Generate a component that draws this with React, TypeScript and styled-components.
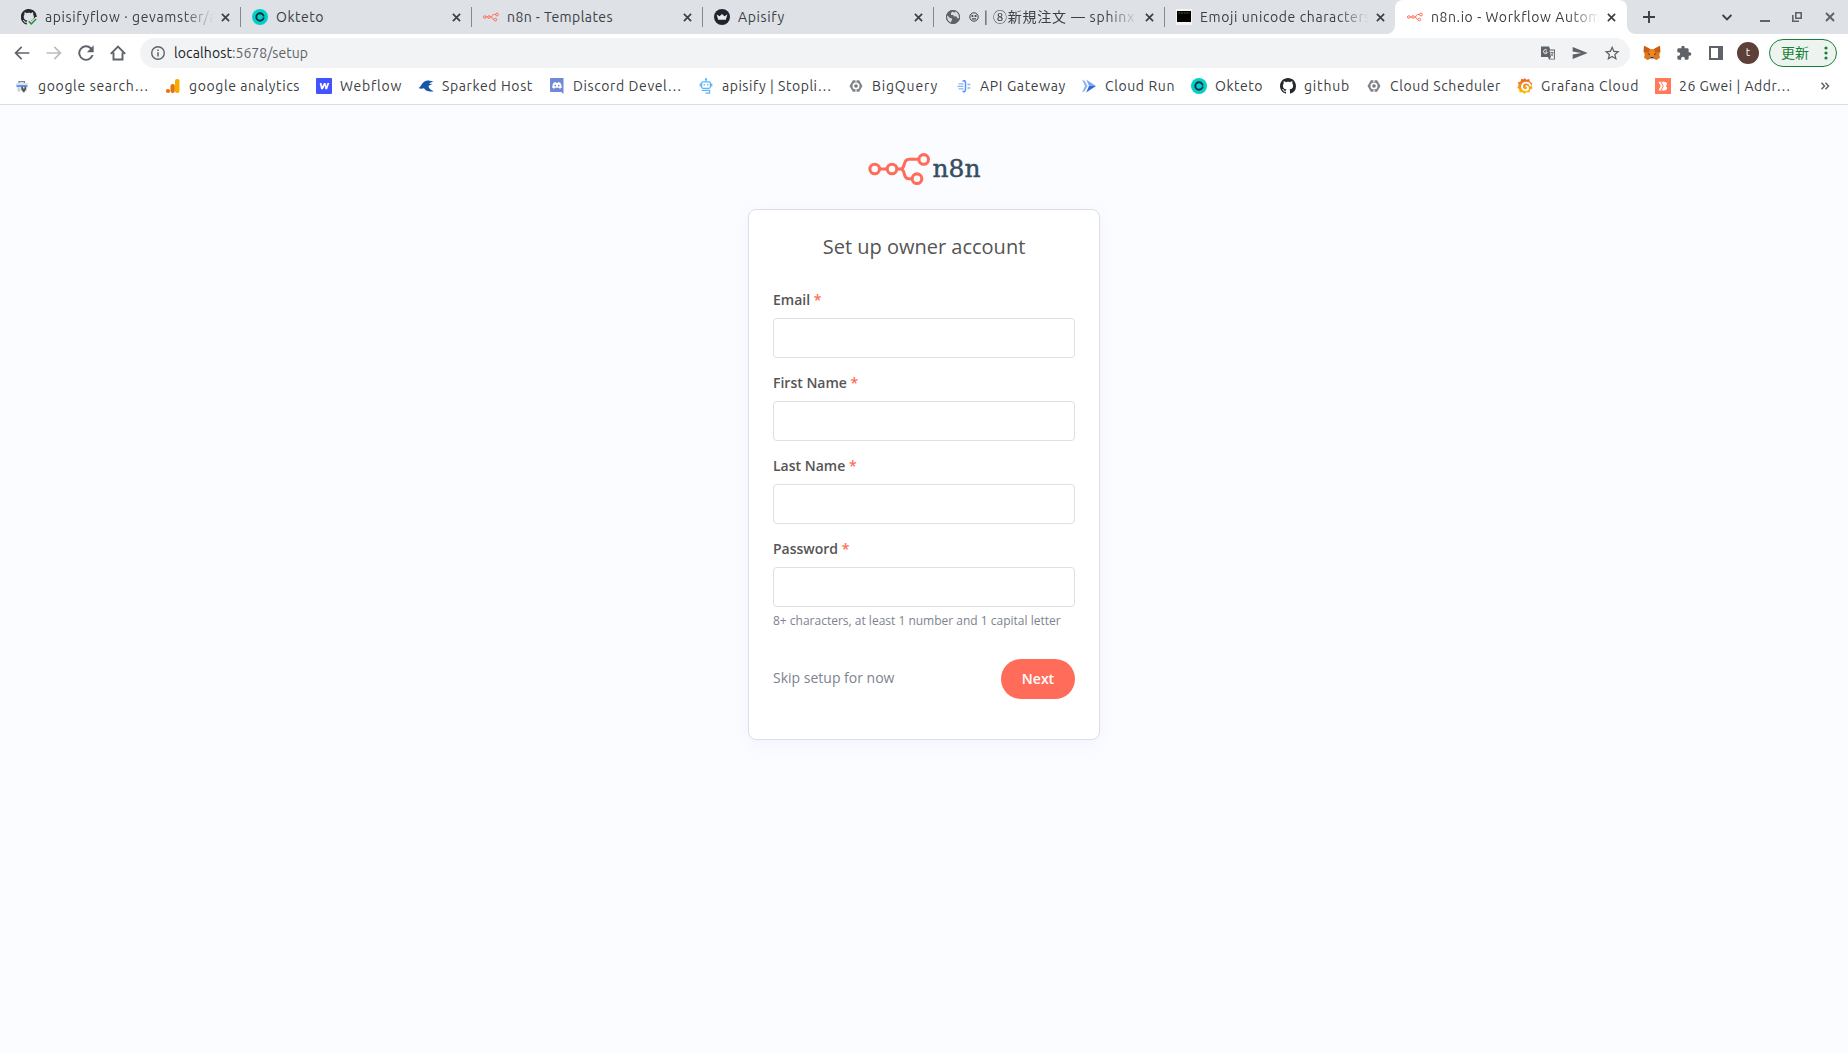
import React, { useLayoutEffect, useRef } from "react";
import styled, { createGlobalStyle } from "styled-components";

const Global = createGlobalStyle`
  * { box-sizing: border-box; }
  html, body { margin: 0; height: 100%; overflow: hidden; background: #fbfcff; }
  svg { display: block; flex: none; }
`;

const UI_FONT = `Ubuntu, "Noto Sans", "Noto Sans CJK JP", sans-serif`;

const Window = styled.div`
  width: 1848px;
  height: 1053px;
  display: flex;
  flex-direction: column;
  font-family: ${UI_FONT};
  font-size: 14px;
  color: #3c4043;
`;

/* ---------- text that spreads its letters over a set width ---------- */

const FitBox = styled.span<{ $w: number }>`
  width: ${(p) => p.$w}px;
  flex: none;
  white-space: pre;
  display: block;
`;

function Fit({ w, children }: { w: number; children: string }) {
  const ref = useRef<HTMLSpanElement>(null);
  useLayoutEffect(() => {
    const el = ref.current;
    if (!el) return;
    el.style.letterSpacing = "0px";
    const natural = el.getBoundingClientRect().width;
    el.style.letterSpacing = `${(w - natural) / Array.from(children).length}px`;
  }, [w, children]);
  return (
    <FitBox $w={w}>
      <span ref={ref}>{children}</span>
    </FitBox>
  );
}

/* ---------- tab strip ---------- */

const TabStrip = styled.div`
  height: 34px;
  flex: none;
  display: flex;
  align-items: stretch;
  background: #dee1e6;
  padding-left: 9px;
`;

const Tab = styled.div<{ $line?: boolean }>`
  position: relative;
  width: 231px;
  flex: none;
  display: flex;
  align-items: center;
  padding: 0 9px 0 12px;
  line-height: 20px;
  &::after {
    content: "";
    display: ${(p) => (p.$line ? "block" : "none")};
    position: absolute;
    right: -1px;
    top: 7px;
    width: 1px;
    height: 20px;
    background: #85888d;
  }
`;

/* The selected tab flares out into the toolbar at both of its lower corners. */
const ActiveTab = styled(Tab)`
  width: 232px;
  background: #fff;
  border-radius: 8px 8px 0 0;
  &::before,
  &::after {
    content: "";
    display: block;
    position: absolute;
    top: auto;
    bottom: 0;
    width: 8px;
    height: 8px;
  }
  &::before {
    left: -8px;
    background: radial-gradient(circle at 0 0, transparent 7.5px, #fff 8px);
  }
  &::after {
    right: -8px;
    background: radial-gradient(circle at 100% 0, transparent 7.5px, #fff 8px);
  }
`;

const TabTitle = styled.div<{ $fade?: boolean }>`
  width: 174px;
  flex: none;
  margin-left: 8px;
  overflow: hidden;
  display: flex;
  align-items: center;
  mask-image: ${(p) => (p.$fade ? "linear-gradient(90deg, #000 138px, transparent 169px)" : "none")};
`;

const CloseSlot = styled.div`
  margin-left: 2px;
  width: 10px;
`;

const Cross = ({ s = 9, c = "#3c4043" }: { s?: number; c?: string }) => (
  <svg width={s} height={s} viewBox="0 0 9 9">
    <path d="M.9.9l7.2 7.2M8.1.9L.9 8.1" stroke={c} strokeWidth="1.700" />
  </svg>
);

const StripControls = styled.div`
  display: flex;
  align-items: center;
  flex: 1;
  padding-left: 16px;
`;

const Gap = styled.span<{ $w: number }>`
  width: ${(p) => p.$w}px;
  flex: none;
`;

/* ---------- toolbar ---------- */

const Toolbar = styled.div`
  height: 37px;
  flex: none;
  background: #fff;
  display: flex;
  align-items: center;
  padding: 0 11px 0 14px;
`;

const Nav = styled.div`
  display: flex;
  flex: none;
  gap: 16px;
  width: 126px;
`;

const Omnibox = styled.div`
  width: 1490px;
  flex: none;
  height: 30px;
  border-radius: 15px;
  background: #f1f3f4;
  display: flex;
  align-items: center;
  padding: 0 10px;
`;

const Url = styled.div`
  display: flex;
  flex: 1;
  margin-left: 8px;
  color: #202124;
  line-height: 20px;
`;

const UrlRest = styled.span`
  color: #5f6368;
`;

const Actions = styled.div`
  display: flex;
  align-items: center;
  gap: 16px;
`;

const Extensions = styled(Actions)`
  margin-left: 13px;
`;

const FoxSlot = styled.div`
  width: 17px;
`;

const Avatar = styled.div`
  width: 22px;
  height: 22px;
  border-radius: 50%;
  background: #5d4037;
  color: #fff;
  font-size: 11px;
  line-height: 21px;
  text-align: center;
  margin-left: -3px;
`;

const Update = styled.div`
  width: 68px;
  height: 28px;
  margin-left: -6px;
  border: 1px solid #188038;
  border-radius: 14px;
  background: #edf4ef;
  color: #188038;
  display: flex;
  align-items: center;
  justify-content: space-between;
  padding: 0 8px 0 11px;
  line-height: 24px;
`;

/* ---------- bookmarks ---------- */

const Bookmarks = styled.div`
  height: 34px;
  flex: none;
  background: #fff;
  border-bottom: 1px solid #dadce0;
  display: flex;
  align-items: center;
  padding: 0 0 3px 14px;
`;

const Bookmark = styled.div<{ $w: number }>`
  width: ${(p) => p.$w}px;
  flex: none;
  display: flex;
  gap: 8px;
  align-items: center;
  line-height: 20px;
`;

/* ---------- setup page ---------- */

const Page = styled.main`
  flex: 1;
  background: #fbfcff;
  display: flex;
  flex-direction: column;
  align-items: center;
  padding-top: 46px;
  font-family: "Open Sans", sans-serif;
`;

const Card = styled.form`
  width: 352px;
  height: 531px;
  margin-top: 18px;
  padding: 24px;
  background: #fff;
  border: 1px solid #dbdfe7;
  border-radius: 8px;
  box-shadow: 0 4px 16px rgba(99, 77, 255, 0.06);
`;

const Title = styled.h1`
  margin: 0 0 32px;
  font-size: 20px;
  font-weight: 400;
  line-height: 25px;
  text-align: center;
  color: #555;
`;

const Field = styled.label`
  display: block;
  margin-bottom: 16px;
`;

const FieldName = styled.span`
  display: block;
  height: 27px;
  font-size: 14px;
  line-height: 17px;
  font-weight: 600;
  color: #555;
`;

const Required = styled.span`
  color: #ff6d5a;
`;

const Input = styled.input`
  display: block;
  width: 302px;
  height: 40px;
  border: 1px solid #dbdfe7;
  border-radius: 4px;
  background: #fff;
  outline: none;
`;

const Hint = styled.div`
  margin-top: -11px;
  font-size: 12px;
  line-height: 18px;
  color: #7d838f;
`;

const Footer = styled.div`
  display: flex;
  justify-content: space-between;
  align-items: center;
  margin-top: 29px;
`;

const Skip = styled.a`
  font-size: 14px;
  line-height: 18px;
  padding-bottom: 2px;
  color: #7d838f;
`;

const Next = styled.button`
  width: 74px;
  height: 40px;
  border: 0;
  border-radius: 20px;
  background: #ff6d5a;
  color: #fff;
  font: 600 14px/18px "Open Sans", sans-serif;
  padding: 0;
`;

/* ---------- icons ---------- */

const OCTO =
  "M8 0C3.58 0 0 3.58 0 8c0 3.54 2.29 6.53 5.47 7.59.4.07.55-.17.55-.38 0-.19-.01-.82-.01-1.49-2.01.37-2.53-.49-2.69-.94-.09-.23-.48-.94-.82-1.13-.28-.15-.68-.52-.01-.53.63-.01 1.08.58 1.23.82.72 1.21 1.87.87 2.33.66.07-.52.28-.87.51-1.07-1.78-.2-3.64-.89-3.64-3.95 0-.87.31-1.59.82-2.15-.08-.2-.36-1.02.08-2.12 0 0 .67-.21 2.2.82.64-.18 1.32-.27 2-.27s1.36.09 2 .27c1.53-1.04 2.2-.82 2.2-.82.44 1.1.16 1.92.08 2.12.51.56.82 1.27.82 2.15 0 3.07-1.87 3.75-3.65 3.95.29.25.54.73.54 1.48 0 1.07-.01 1.93-.01 2.2 0 .21.15.46.55.38A8.01 8.01 0 0 0 16 8c0-4.42-3.58-8-8-8z";

const Icon16 = ({ children }: { children: React.ReactNode }) => (
  <svg width="16" height="16" viewBox="0 0 16 16" fill="none">
    {children}
  </svg>
);

const GithubIcon = () => (
  <Icon16>
    <path d={OCTO} fill="#24292e" />
  </Icon16>
);

const GithubOk = () => (
  <svg width="16" height="16" viewBox="1 0 16 16" fill="none">
    <path d={OCTO} fill="#24292e" transform="translate(.8 0)" />
    <path d="M7 12.500l3-2.500 1.500 1.800L15.500 8H18v9H8z" fill="#dee1e6" />
    <path d="M8.700 12.300l2.600 2.600 4.800-5" stroke="#23913f" strokeWidth="1.500" />
  </svg>
);

const Okteto = () => (
  <Icon16>
    <circle cx="8" cy="8" r="8" fill="#00d1ca" />
    <circle cx="8" cy="8" r="3.700" stroke="#1a2b3c" strokeWidth="1.900" />
    <path d="M9.500 8h4" stroke="#00d1ca" strokeWidth="0.900" />
  </Icon16>
);

const N8nSmall = () => (
  <Icon16>
    <g stroke="#ff6d5a" strokeWidth="1">
      <circle cx="1.800" cy="8" r="1.300" />
      <circle cx="6" cy="8" r="1.300" />
      <circle cx="14" cy="5.500" r="1.400" />
      <circle cx="12.300" cy="10.600" r="1.400" />
      <path d="M3 8h1.800M7.200 8h.9c1.600 0 .6-2.500 2.400-2.500h2.100M8.100 8c1.600 0 .8 2.600 2.800 2.600" />
    </g>
  </Icon16>
);

const Apisify = () => (
  <Icon16>
    <circle cx="8" cy="8" r="8" fill="#23232f" />
    <path d="M2.600 5.500l3 1.700L8 5l2.400 2.200 3-1.700-1.600 5.300H4.200z" fill="#e9e9ee" />
  </Icon16>
);

const Globe = () => (
  <Icon16>
    <circle cx="8" cy="8" r="7" fill="#5f6368" />
    <path d="M2 6.200l3 2.800 2 .4v1.400L5.500 13.700C3.500 12.800 2 10.800 2 8zM7.500 2.500L6 4v2h2.500v1.300l3 .3 1 1.800 1.600-.3c.5-3-1.100-6-4-6.800l-.6 1.500z" fill="#dee1e6" opacity=".95" />
    <circle cx="8" cy="8" r="6.500" stroke="#5f6368" />
  </Icon16>
);

const Terminal = () => (
  <Icon16>
    <path d="M0 0h16v16H0z" fill="#f4f3ee" />
    <path d="M1 2h14v11H1z" fill="#000" />
    <path d="M2.500 4h11" stroke="#777" strokeWidth=".7" strokeDasharray="2 .6" />
  </Icon16>
);

const Face = () => (
  <svg width="10" height="10" viewBox="0 0 10 10" fill="none">
    <circle cx="5" cy="5" r="4.200" stroke="#3c4043" strokeWidth="1" />
    <circle cx="3.400" cy="4" r="1.100" fill="#3c4043" />
    <circle cx="6.600" cy="4" r="1.100" fill="#3c4043" />
    <path d="M3 6.300h4v1.200H3z" fill="#3c4043" />
  </svg>
);

const SearchConsole = () => (
  <Icon16>
    <path d="M5 5V3.600h5.500V5" stroke="#80868b" strokeWidth="1.300" />
    <path d="M2 5h12v2H2z" fill="#dfe3e8" />
    <path d="M2.500 7h11v2.200h-11z" fill="#5e97f6" />
    <path d="M3 9.200h10v4.300H3z" fill="#e8eaed" />
    <path d="M4.300 9.200h1.200v4.300H4.300z" fill="#b9c0c8" />
    <path d="M7.300 9l1.700-.8v2.300h1.500V8.200l1.700.8v2.500l-1.500 1.700v1.100H8.800v-1.100l-1.500-1.700z" fill="#51565c" />
  </Icon16>
);

const Analytics = () => (
  <Icon16>
    <rect x="10" y="1" width="4.500" height="14" rx="2" fill="#f9ab00" />
    <rect x="5.500" y="6" width="4.300" height="9" rx="2" fill="#e8710a" />
    <circle cx="3" cy="13" r="2.100" fill="#e8710a" />
  </Icon16>
);

const Webflow = () => (
  <Icon16>
    <rect width="16" height="16" rx="1" fill="#4353ff" />
    <path d="M13.300 4.900l-2.200 6.300H9.300L8.900 7.500l-2 3.700H5.100L3.700 4.900h1.800l.6 3.700 1.900-3.700h1.700l.3 3.800 1.400-3.800z" fill="#fff" />
  </Icon16>
);

const Sparked = () => (
  <Icon16>
    <path d="M.3 10C3.500 9.300 4 2.900 9.200 2.600c2.300-.1 3.700 1 6.300.5-1.500 1.500-3.200 1.400-4.300 2.500 1.200.5 2.200.2 3.200.1-1.200 1.500-3 1.300-3.900 2.200.4 2.900 2.500 4.100 5.200 5.300-4.500.9-8-.2-9.700-2.900-1.700.6-3.700.7-5.700-.3z" fill="#1556a8" />
  </Icon16>
);

const Discord = () => (
  <Icon16>
    <path d="M2 0h12.500v16l-2.200-2H2a1 1 0 0 1-1-1V1a1 1 0 0 1 1-1z" fill="#7289da" />
    <path d="M4.600 4.700l2-.7.4.7h1.900l.4-.7 2 .7c1 1.500 1.500 3.200 1.400 5l-2 1.100-.7-1H6l-.7 1-2-1.100c-.1-1.800.4-3.500 1.300-5z" fill="#fff" />
    <circle cx="6.300" cy="7.600" r=".9" fill="#7289da" />
    <circle cx="9.700" cy="7.600" r=".9" fill="#7289da" />
  </Icon16>
);

const Robot = () => (
  <Icon16>
    <g stroke="#5bb8f5" strokeWidth="1.300">
      <rect x="3.600" y="3.800" width="8.800" height="6.500" rx="1.500" />
      <path d="M8 1v2.800M2.300 5.500v3M13.700 5.500v3M3.600 12.400h8v2.700H7.500" />
      <path d="M6.300 6v1.500M9.700 6v1.500" />
    </g>
    <circle cx="8" cy="1.200" r="1.100" fill="#5bb8f5" />
  </Icon16>
);

const Hex = () => (
  <Icon16>
    <path d="M4.900 2.300h6.200L14.500 8l-3.400 5.700H4.900L1.500 8z" fill="#808387" />
    <circle cx="8" cy="8" r="3.500" fill="#fff" />
    <circle cx="8" cy="8" r="1.800" fill="#75787c" />
    <path d="M8 2v2M8 12v2.500" stroke="#fff" strokeWidth="1.100" />
  </Icon16>
);

const ApiGateway = () => (
  <Icon16>
    <path d="M2.500 5.800h5M1.500 8.300h6M2.500 10.800h5" stroke="#8ab4f8" strokeWidth="1.300" />
    <path d="M11.500 6.500h2.800M11.500 10h2.800" stroke="#8ab4f8" strokeWidth="1.500" />
    <path d="M6.500 3.300q2.800-1.600 3 1.200v7.300q-.2 2.600-3 1.500" stroke="#5b92f5" strokeWidth="1.500" />
  </Icon16>
);

const CloudRun = () => (
  <Icon16>
    <path d="M1 1.500l3 6.500-3 6.500 3-1.800L6.500 8 4 3.300z" fill="#8ab4f8" />
    <path d="M5.200 1.500L15 8H8z" fill="#7fa8f0" />
    <path d="M5.200 14.500L15 8H8z" fill="#3367d6" />
  </Icon16>
);

const Grafana = () => (
  <svg width="16" height="16" viewBox="0 0 16 16" fill="none">
    <defs>
      <linearGradient id="grafana" x1="0" y1="0" x2="0" y2="1">
        <stop offset="0" stopColor="#f05a28" />
        <stop offset="1" stopColor="#fbca0a" />
      </linearGradient>
    </defs>
    <path d="M7.500 0l1.800 1.800 3-.8.6 2.700 2.500 1.700-1 2.300 1.200 2.600-2.400 1.300-.7 2.800-2.800-.1L7.300 16l-2-1.800-2.800.2-.3-2.900L.3 9.400l1.400-2.200L.9 4.500l2.600-1L4.400.8l2.300.8z" fill="url(#grafana)" />
    <path d="M13.500 8.300A4.600 4.600 0 0 0 9 4.600 4 4 0 0 0 5 8.500a3.600 3.600 0 0 0 3.600 3.600c1.700 0 2.400-1 2.400-2.200A1.800 1.800 0 0 0 8.600 8.200" stroke="#fff" strokeWidth="1.900" />
  </svg>
);

const Gwei = () => (
  <Icon16>
    <path d="M0 0h16v16H0z" fill="#ff7a59" />
    <path d="M3.500 3.700h5c4.200 0 4.300 3.200 2 4.200 2.700 1 2 4.600-2 4.600h-5L5.700 8.100z" fill="#fff" />
    <path d="M6 3.700l2.200 4.400L6 12.500" stroke="#ff7a59" strokeWidth="1" />
  </Icon16>
);

const Fox = () => (
  <svg width="18" height="16" viewBox="0 0 18 16">
    <path d="M1 .8L7 4h4l6-3.200.3 6-1 3 .7 3-3.500 2.200L11 14H7l-2.500 1L1 12.800l.7-3-1-3z" fill="#e2761b" />
    <path d="M1 .8L7 4 5.800 7.500.7 6.800zM17 .8L11 4l1.200 3.500 5.100-.7z" fill="#c4601c" />
    <path d="M7 4h4l1.200 6L9 11.500 5.800 10z" fill="#f6851b" />
    <path d="M7 13l.5-1.500h3L11 13l-.6 1.500H7.600z" fill="#f1e2d4" />
    <path d="M7.500 11.700h3l.3 1.500H7.200zM4.500 8.300L7 9l-.4 1.200zM13.500 8.300L11 9l.4 1.200z" fill="#233447" />
  </svg>
);

const Mat = ({ d, c = "#5f6368", s = 16 }: { d: string; c?: string; s?: number }) => (
  <svg width={s} height={s} viewBox="0 0 24 24" fill={c}>
    <path d={d} />
  </svg>
);

const BACK = "M23 10.700H5.300l7-7L10.600 2 .6 12l10 10 1.700-1.700-7-7H23z";
const FORWARD = "M1 10.700h17.700l-7-7L13.400 2l10 10-10 10-1.700-1.700 7-7H1z";
const RELOAD =
  "M20.200 3.800A11.600 11.600 0 1 0 23.300 15h-3a8.700 8.700 0 1 1-2.200-9.100L13.300 10.700H23.500V.5z";
const PUZZLE =
  "M20.500 11H19V7c0-1.100-.9-2-2-2h-4V3.500a2.500 2.500 0 0 0-5 0V5H4c-1.100 0-2 .9-2 2v3.800h1.500c1.500 0 2.700 1.200 2.700 2.700s-1.200 2.700-2.700 2.700H2V20c0 1.100.9 2 2 2h3.800v-1.500c0-1.500 1.200-2.700 2.700-2.700s2.700 1.200 2.700 2.700V22H17c1.100 0 2-.9 2-2v-4h1.500a2.500 2.500 0 0 0 0-5z";
const STAR =
  "M23.500 9.200l-8.100-.7L12.200 1 9 8.500l-8.100.7L7 14.500l-1.800 8 7-4.200 7 4.200-1.900-8zM12.200 16.300l-4.200 2.500 1.100-4.800-3.700-3.200 4.900-.4 1.900-4.500 1.900 4.500 4.900.4-3.700 3.200 1.100 4.800z";

const Translate = () => (
  <Icon16>
    <path d="M1 1.500h8l1.200 3h4.800v10H9L8 12H1z" fill="#5f6368" />
    <path d="M9.500 5.500h4.600v8.200H9.900l1-2z" fill="#f1f3f4" />
    <path d="M7 5.200a2 2 0 1 0 .1 2.600V7H5.400" stroke="#f1f3f4" strokeWidth="1" />
    <path d="M10.200 7.600h3.500M12 6.700v.9M13 7.700c-.3 1.600-1.200 2.600-2.400 3.500M11 8.500l2.300 2.800" stroke="#5f6368" strokeWidth=".8" />
  </Icon16>
);

const Info = () => (
  <Icon16>
    <circle cx="8" cy="8" r="6.300" stroke="#5f6368" strokeWidth="1.400" />
    <path d="M8 7.200v4.300M8 4.500V6" stroke="#5f6368" strokeWidth="1.500" />
  </Icon16>
);

const Logo = () => (
  <svg width="114" height="40" viewBox="867 151 114 40" fill="none">
    <g stroke="#ff6d5a" strokeWidth="3.100">
      <circle cx="874.700" cy="169" r="4.800" />
      <circle cx="892" cy="169" r="4.800" />
      <circle cx="923.700" cy="159.400" r="4.800" />
      <circle cx="917" cy="178.700" r="4.800" />
      <path d="M879.500 169h7.700M896.800 169h3.500c6 0 1.500-9.700 9-9.700h9.600M900.300 169c6 0 1.700 9.700 8.600 9.700h3.300" />
    </g>
    <text
      x="932.500"
      y="177.200"
      fontFamily="DejaVu Serif, serif"
      fontSize="24"
      textLength="48"
      lengthAdjust="spacingAndGlyphs"
      fill="#384d5f"
      stroke="#384d5f"
      strokeWidth=".45"
    >
      n8n
    </text>
  </svg>
);

/* ---------- data ---------- */

const tabs = [
  { icon: <GithubOk />, text: "apisifyflow · gevamster/a", w: 172, fade: true },
  { icon: <Okteto />, text: "Okteto", w: 48 },
  { icon: <N8nSmall />, text: "n8n - Templates", w: 106 },
  { icon: <Apisify />, text: "Apisify", w: 47 },
  { icon: <Globe />, face: true, text: "⑧新規注文 — sphinx", w: 142, fade: true },
  { icon: <Terminal />, text: "Emoji unicode characters", w: 171, fade: true },
  { icon: <N8nSmall />, text: "n8n.io - Workflow Autom", w: 170, fade: true },
];

const bookmarks: [React.ReactNode, string, number, number][] = [
  [<SearchConsole />, "google search…", 111, 151],
  [<Analytics />, "google analytics", 111, 151],
  [<Webflow />, "Webflow", 62, 102],
  [<Sparked />, "Sparked Host", 91, 131],
  [<Discord />, "Discord Devel…", 109, 149],
  [<Robot />, "apisify | Stopli…", 110, 150],
  [<Hex />, "BigQuery", 66, 108],
  [<ApiGateway />, "API Gateway", 86, 125],
  [<CloudRun />, "Cloud Run", 70, 110],
  [<Okteto />, "Okteto", 48, 89],
  [<GithubIcon />, "github", 46, 86],
  [<Hex />, "Cloud Scheduler", 111, 151],
  [<Grafana />, "Grafana Cloud", 98, 138],
  [<Gwei />, "26 Gwei | Addr…", 112, 165],
];

const fields = ["Email", "First Name", "Last Name", "Password"];

export default function App() {
  return (
    <Window>
      <Global />
      <TabStrip>
        {tabs.map((t, i) => {
          const Shell = i === tabs.length - 1 ? ActiveTab : Tab;
          return (
            <Shell key={i} $line={i < 5}>
              {t.icon}
              <TabTitle $fade={t.fade}>
                {t.face && (
                  <>
                    <Face />
                    <Gap $w={5} />
                    <Fit w={9}>|</Fit>
                  </>
                )}
                <Fit w={t.w}>{t.text}</Fit>
              </TabTitle>
              <CloseSlot>
                <Cross />
              </CloseSlot>
            </Shell>
          );
        })}
        <StripControls>
          <svg width="12" height="12" viewBox="0 0 12 12">
            <path d="M6 0v12M0 6h12" stroke="#3c4043" strokeWidth="1.900" />
          </svg>
          <Gap $w={67} />
          <svg width="10" height="7" viewBox="0 0 10 7" fill="none">
            <path d="M.6 1L5 5.500 9.400 1" stroke="#3c4043" strokeWidth="1.800" />
          </svg>
          <Gap $w={28} />
          <svg width="10" height="10" viewBox="0 0 10 10">
            <path d="M0 9h10" stroke="#5f6368" strokeWidth="2" />
          </svg>
          <Gap $w={22} />
          <svg width="10" height="10" viewBox="0 0 10 10" fill="none">
            <path d="M3.800.8h5.400v5.400H3.800zM.8 3v6.200H7" stroke="#5f6368" strokeWidth="1.600" />
          </svg>
          <Gap $w={23} />
          <Cross s={10} c="#5f6368" />
        </StripControls>
      </TabStrip>

      <Toolbar>
        <Nav>
          <Mat d={BACK} />
          <Mat d={FORWARD} c="#babcbe" />
          <Mat d={RELOAD} />
          <svg width="16" height="16" viewBox="0 0 16 16" fill="none">
            <path d="M.8 8.800L8 1.500l7.200 7.300M3.500 7.500v7h9v-7" stroke="#5f6368" strokeWidth="1.900" />
          </svg>
        </Nav>
        <Omnibox>
          <Info />
          <Url>
            <Fit w={58}>localhost</Fit>
            <UrlRest>
              <Fit w={76}>:5678/setup</Fit>
            </UrlRest>
          </Url>
          <Actions>
            <Translate />
            <Mat d="M1 3l22.500 9L1 21v-6.800L14 12 1 9.800z" />
            <Mat d={STAR} />
          </Actions>
        </Omnibox>
        <Extensions>
          <FoxSlot>
            <Fox />
          </FoxSlot>
          <Mat d={PUZZLE} />
          <svg width="16" height="16" viewBox="0 0 16 16" fill="none">
            <path d="M2 2h12v12H2z" stroke="#5f6368" strokeWidth="2" />
            <path d="M10 2h4v12h-4z" fill="#5f6368" />
          </svg>
          <Avatar>t</Avatar>
          <Update>
            更新
            <svg width="4" height="14" viewBox="0 0 4 14" fill="#188038">
              <circle cx="2" cy="2" r="1.600" />
              <circle cx="2" cy="7" r="1.600" />
              <circle cx="2" cy="12" r="1.600" />
            </svg>
          </Update>
        </Extensions>
      </Toolbar>

      <Bookmarks>
        {bookmarks.map(([icon, text, w, slot], i) => (
          <Bookmark key={i} $w={slot}>
            {icon}
            <Fit w={w}>{text}</Fit>
          </Bookmark>
        ))}
        <svg width="10" height="8" viewBox="0 0 10 8" fill="none">
          <path d="M1.500.8L4.500 4l-3 3.200M5.500.8l3 3.200-3 3.200" stroke="#5f6368" strokeWidth="1.500" />
        </svg>
      </Bookmarks>

      <Page>
        <Logo />
        <Card>
          <Title>Set up owner account</Title>
          {fields.map((name) => (
            <Field key={name}>
              <FieldName>
                {name} <Required>*</Required>
              </FieldName>
              <Input />
            </Field>
          ))}
          <Hint>8+ characters, at least 1 number and 1 capital letter</Hint>
          <Footer>
            <Skip>Skip setup for now</Skip>
            <Next type="button">Next</Next>
          </Footer>
        </Card>
      </Page>
    </Window>
  );
}
